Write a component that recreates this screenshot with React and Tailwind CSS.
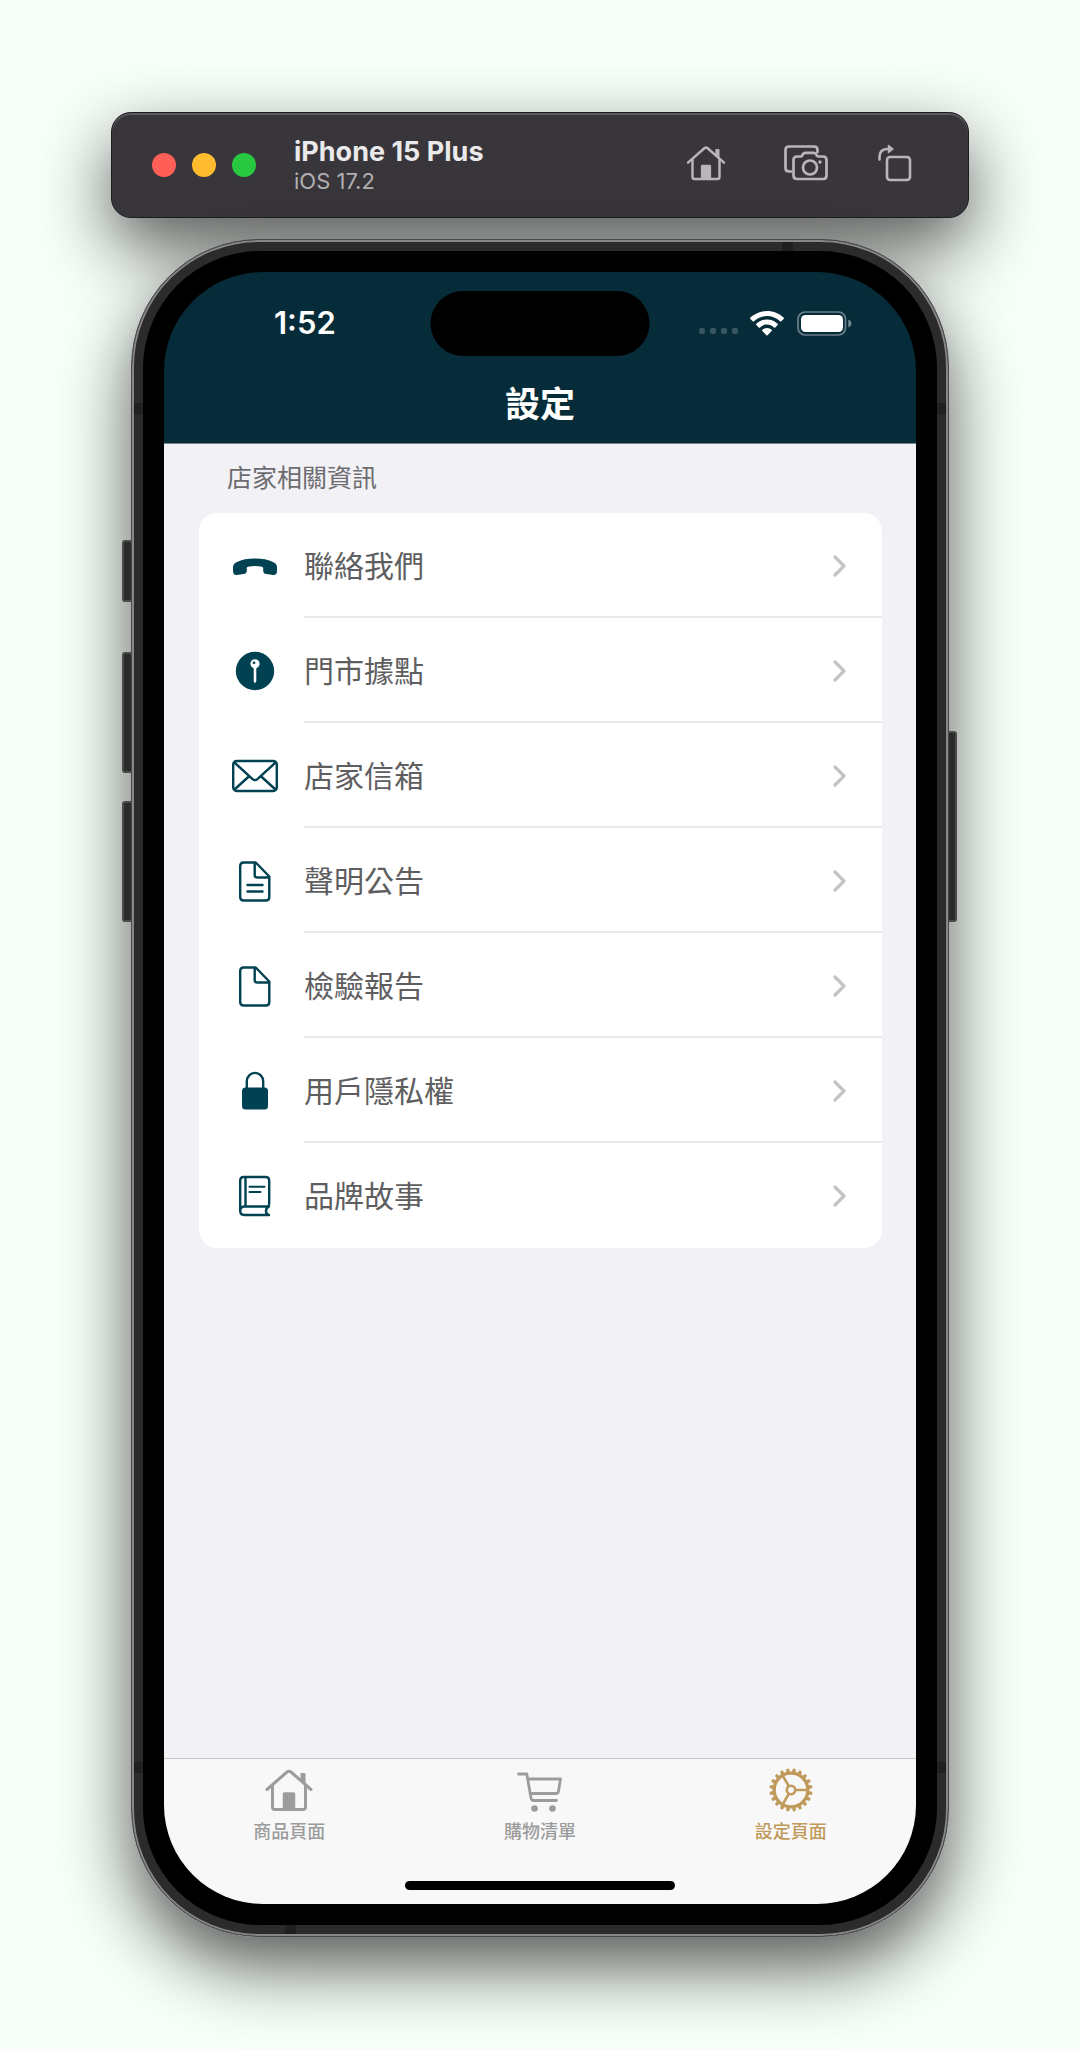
const CJK = "font-['Inter','Noto_Sans_CJK_TC',sans-serif]";

function HomeIcon({ className }) {
  return (
    <svg viewBox="0 0 48 44" className={className} fill="none" stroke="currentColor" strokeWidth="3" strokeLinecap="round" strokeLinejoin="round" aria-hidden="true">
      <path d="M2 21.500 22 4q2-1.600 4 0l20 17.500" />
      <path d="M7.500 18v21q0 2.500 2.500 2.500h28q2.500 0 2.500-2.500V18" />
      <path d="M36.500 12V6h3v9.500z" fill="currentColor" strokeWidth="2" />
      <path d="M18.500 41V26q0-1 1-1h9q1 0 1 1v15z" fill="currentColor" strokeWidth="1.500" />
    </svg>
  );
}

function CamerasIcon() {
  return (
    <svg viewBox="0 0 44 36" className="h-9 w-11" fill="none" stroke="currentColor" strokeWidth="2.700" strokeLinejoin="round" aria-hidden="true">
      <path d="M8 26.500H5q-3.500 0-3.500-3.500V5Q1.500 1.500 5 1.500h25q3.500 0 3.500 3.500v3" />
      <path d="M13 11.500h3.500q1 0 1.500-.8l1-1.700q.8-1.200 2.200-1.200h8.600q1.400 0 2.200 1.200l1 1.700q.5.800 1.500.8h4.500q3.500 0 3.500 3.500v15.500q0 3.500-3.500 3.500H13q-3.500 0-3.500-3.500V15q0-3.500 3.500-3.500z" />
      <circle cx="26" cy="22.500" r="7" />
      <circle cx="36" cy="17" r="1.700" fill="currentColor" stroke="none" />
    </svg>
  );
}

function RotateIcon() {
  return (
    <svg viewBox="0 0 34 38" className="h-[38px] w-[34px]" fill="none" stroke="currentColor" strokeWidth="2.600" strokeLinecap="round" strokeLinejoin="round" aria-hidden="true">
      <rect x="9" y="13" width="23" height="23" rx="3" />
      <path d="M1.500 15.500V13q0-7.500 7.500-8h2" />
      <path d="M10.500 1.500 15 5l-4.500 3.500z" fill="currentColor" strokeWidth="1.500" />
    </svg>
  );
}

function WifiIcon() {
  return (
    <svg viewBox="0 0 34 25" className="h-[25px] w-[34px]" fill="currentColor" aria-hidden="true">
      <path d="M17 0C10.600 0 4.800 2.500.4 6.600q-.7.700 0 1.400l2.300 2.300q.6.600 1.300 0C7.400 7 12 5 17 5s9.600 2 13 5.300q.7.600 1.300 0L33.600 8q.7-.7 0-1.400C29.200 2.500 23.400 0 17 0z" />
      <path d="M17 8.500c-4.100 0-7.800 1.600-10.600 4.200q-.7.700 0 1.400l2.300 2.300q.6.600 1.300 0c1.900-1.700 4.300-2.800 7-2.800s5.100 1.100 7 2.800q.7.600 1.300 0l2.300-2.300q.7-.7 0-1.400C24.800 10.100 21.100 8.500 17 8.500z" />
      <path d="M17 17c-1.800 0-3.400.7-4.600 1.800q-.7.700 0 1.300l4 4.200q.6.600 1.200 0l4-4.200q.7-.6 0-1.300C20.400 17.700 18.800 17 17 17z" />
    </svg>
  );
}

function BatteryIcon() {
  return (
    <svg viewBox="0 0 55 25" className="h-[25px] w-[55px]" aria-hidden="true">
      <rect x="1" y="1" width="47.500" height="23" rx="7" fill="none" stroke="#fff" strokeOpacity=".4" strokeWidth="1.700" />
      <rect x="4" y="4" width="42" height="17" rx="4.500" fill="#fff" />
      <path d="M51.300 8.500q3 1.200 3 4t-3 4z" fill="#fff" fillOpacity=".45" />
    </svg>
  );
}

const line = { fill: "none", stroke: "currentColor", strokeWidth: 2.4, strokeLinejoin: "round", strokeLinecap: "round" };

function Icon({ children }) {
  return (
    <svg viewBox="0 0 48 48" className="size-12 shrink-0 text-[#004152]" aria-hidden="true">
      {children}
    </svg>
  );
}

const PhoneIcon = () => (
  <Icon>
    <path fill="currentColor" d="M2 25.500c0-2.600 1.200-4.300 4-5.600C10.500 17.700 17 16.500 24 16.500s13.500 1.200 18 3.400c2.800 1.300 4 3 4 5.600v3.500c0 2.800-1.500 4.200-4 3.900l-6.500-.8c-2.300-.3-3.300-1.200-3.300-3.300v-2.600c0-.9-.4-1.300-1.200-1.500-2-.5-4.300-.7-7-.7s-5 .2-7 .7c-.8.200-1.200.6-1.200 1.500v2.600c0 2.100-1 3-3.300 3.300l-6.500.8c-2.500.3-4-1.100-4-3.900z" />
  </Icon>
);

const PinIcon = () => (
  <Icon>
    <circle cx="24" cy="24" r="19.200" fill="currentColor" />
    <circle cx="24" cy="16.800" r="4.600" fill="#fff" />
    <circle cx="23" cy="15.800" r="1.400" fill="currentColor" />
    <path d="M22.700 20h2.600v14L24 36.500 22.700 34z" fill="#fff" />
  </Icon>
);

const MailIcon = () => (
  <Icon>
    <g {...line}>
      <rect x="2.200" y="9" width="43.600" height="30" rx="3.500" />
      <path d="m3.500 10.500 17.800 16.300q2.700 2.400 5.400 0L44.500 10.500M3.500 37.500l14.300-13M44.500 37.500l-14.300-13" />
    </g>
  </Icon>
);

const page = "M12.700 5.500h12L38.300 19.500V40q0 3.500-3.500 3.500H12.700q-3.500 0-3.500-3.500V9q0-3.500 3.500-3.500zM23.700 6v12.200q0 2.300 2.300 2.300h12";

const FileTextIcon = () => (
  <Icon>
    <path {...line} d={page} />
    <path {...line} d="M16.500 28h15M16.500 34.500h15" />
  </Icon>
);

const FileIcon = () => (
  <Icon>
    <path {...line} d={page} />
  </Icon>
);

const LockIcon = () => (
  <Icon>
    <rect x="11" y="20.500" width="26" height="22" rx="3.500" fill="currentColor" />
    <path {...line} d="M15.800 22v-7.500a8.200 8.600 0 0 1 16.400 0V22" />
  </Icon>
);

const BookIcon = () => (
  <Icon>
    <path {...line} d="M9.200 38V8.500Q9.200 5 12.700 5h22q3.500 0 3.500 3.500v23q0 2.500-2 3.500M14.500 5v29M38 34.500H13.200q-4 .3-4 4.500 0 4 4 4H38q-3-.5-3-4t3-4.500" />
    <path {...line} strokeWidth="2" d="M18.500 14.800h15M18.500 20h11" />
  </Icon>
);

function CartIcon() {
  return (
    <svg viewBox="0 0 48 44" className="h-11 w-12" fill="none" stroke="currentColor" strokeWidth="2.800" strokeLinecap="round" strokeLinejoin="round" aria-hidden="true">
      <path d="M2.500 6h8.300l4.200 24q.4 2.500 3 2.500h22.500" />
      <path d="M12 11h32.500l-2 12.300q-.3 2.200-2.500 2.200H14.500" />
      <circle cx="18.500" cy="40.500" r="3.300" fill="currentColor" stroke="none" />
      <circle cx="36.500" cy="40.500" r="3.300" fill="currentColor" stroke="none" />
    </svg>
  );
}

const TEETH = Array.from({ length: 20 }, (_, i) => i * 18 + 9);

function GearIcon() {
  return (
    <svg viewBox="0 0 44 44" className="size-11" fill="none" stroke="currentColor" strokeWidth="2.600" aria-hidden="true">
      <circle cx="22" cy="22" r="16.800" strokeWidth="3.200" />
      <circle cx="22" cy="22" r="4.200" />
      <path d="M26.200 22H39M19.900 18.400 13.700 7.600M19.900 25.600l-6.200 10.800" />
      {TEETH.map((a) => (
        <path key={a} d="M19.900 4.500 20.700.5h2.600l.8 4z" fill="currentColor" stroke="none" transform={`rotate(${a} 22 22)`} />
      ))}
    </svg>
  );
}

const ROWS = [
  ["聯絡我們", PhoneIcon],
  ["門市據點", PinIcon],
  ["店家信箱", MailIcon],
  ["聲明公告", FileTextIcon],
  ["檢驗報告", FileIcon],
  ["用戶隱私權", LockIcon],
  ["品牌故事", BookIcon],
];

function SimulatorBar() {
  return (
    <header className="flex h-[106px] items-center rounded-[20px] border border-[#1d1c1f] bg-[#39363b] pr-[56px] pl-10 shadow-[inset_0_2px_0_#5c5a5e,0_28px_70px_rgba(0,0,0,0.65)]">
      <div className="flex gap-4">
        <button aria-label="Close" className="size-6 rounded-full bg-[#ff5f57]" />
        <button aria-label="Minimize" className="size-6 rounded-full bg-[#febc2e]" />
        <button aria-label="Zoom" className="size-6 rounded-full bg-[#28c840]" />
      </div>
      <div className="ml-[38px] flex-1">
        <h1 className="text-[27px] leading-8 font-bold text-[#ebeaeb]">iPhone 15 Plus</h1>
        <p className="text-[22px] leading-[26px] text-[#b1afb2]">iOS 17.2</p>
      </div>
      <div className="flex items-center pb-1 text-[#b9b6bb]">
        <button aria-label="Home">
          <HomeIcon className="h-9 w-10" />
        </button>
        <button aria-label="Screenshot" className="ml-[58px]">
          <CamerasIcon />
        </button>
        <button aria-label="Rotate" className="ml-[50px]">
          <RotateIcon />
        </button>
      </div>
    </header>
  );
}

function StatusBar() {
  return (
    <div className="relative flex h-[102px] items-center justify-between pr-16 pl-[110px] text-white">
      <span className="text-[31px] leading-9 font-semibold">1:52</span>
      <div className="absolute top-[19px] left-1/2 h-[65px] w-[219px] -translate-x-1/2 rounded-full bg-black" />
      <div className="flex items-center">
        <div className="mt-4 mr-3 flex gap-[5px]">
          {[0, 1, 2, 3].map((i) => (
            <span key={i} className="size-[6px] rounded-[2px] bg-white/20" />
          ))}
        </div>
        <WifiIcon />
        <span className="w-[13px]" />
        <BatteryIcon />
      </div>
    </div>
  );
}

function SettingsScreen() {
  return (
    <div className="flex min-h-[1632px] flex-col overflow-hidden rounded-[99px]">
      <div className="h-[172px] border-b border-[#71858e] bg-[#062c39]">
        <StatusBar />
        <h2 className="pt-1 text-center text-[35px] leading-[52px] font-bold text-white">設定</h2>
      </div>
      <main className="flex-1 bg-[#f2f1f6] pr-[34px] pl-[35px]">
        <h3 className="pt-4 pb-4 pl-7 text-[25px] leading-[37px] text-[#6d6c70]">店家相關資訊</h3>
        <ul className="overflow-hidden rounded-[18px] bg-white">
          {ROWS.map(([label, RowIcon]) => (
            <li key={label} className="group">
              <a href="#" className="flex h-[105px] items-center pl-8 text-[30px] text-[#5e5e60]">
                <RowIcon />
                <span className="ml-[25px] flex h-full flex-1 items-center justify-between border-b-2 border-[#e9e9ea] pt-[3px] pr-9 group-last:border-transparent">
                  {label}
                  <svg viewBox="0 0 13 22" className="h-[22px] w-[13px]" fill="none" stroke="#c4c4c6" strokeWidth="3.200" strokeLinecap="round" strokeLinejoin="round" aria-hidden="true">
                    <path d="m2 2 9 9-9 9" />
                  </svg>
                </span>
              </a>
            </li>
          ))}
        </ul>
      </main>
      <nav className="border-t border-[#c9c8cd] bg-[#f8f8f8]">
        <div className="grid grid-cols-3 pt-[9px] text-[18px] leading-6 font-medium text-[#9c9c9c]">
          <a href="#" className="flex flex-col items-center gap-2">
            <HomeIcon className="h-11 w-12" />
            商品頁面
          </a>
          <a href="#" className="flex flex-col items-center gap-2">
            <CartIcon />
            購物清單
          </a>
          <a href="#" aria-current="page" className="flex flex-col items-center gap-2 text-[#c09a5b]">
            <GearIcon />
            設定頁面
          </a>
        </div>
        <div className="mx-auto mt-[37px] mb-[14px] h-[9px] w-[270px] rounded-full bg-black" />
      </nav>
    </div>
  );
}

function SideButton({ className }) {
  return <span className={`absolute w-[11px] rounded-[3px] border-2 border-[#4b4b4b] bg-[#2b2b2b] ${className}`} />;
}

function Phone() {
  return (
    <div className="relative mx-5 mt-[21px] rounded-[128px] shadow-[0_30px_70px_rgba(0,0,0,0.65)]">
      <SideButton className="top-[301px] -left-[9px] h-[62px]" />
      <SideButton className="top-[413px] -left-[9px] h-[121px]" />
      <SideButton className="top-[562px] -left-[9px] h-[121px]" />
      <SideButton className="top-[492px] -right-[8px] h-[191px]" />
      <div className="relative rounded-[128px] border border-[#4a4a4a] bg-[#2b2b2b] p-[11px] shadow-[inset_0_0_0_2px_#868686]">
        <span className="absolute top-[2px] right-[155px] h-[9px] w-[11px] bg-[#202020]" />
        <span className="absolute bottom-[2px] left-[153px] h-[9px] w-[11px] bg-[#202020]" />
        <span className="absolute top-[163px] left-[2px] h-[11px] w-[9px] bg-[#202020]" />
        <span className="absolute top-[163px] right-[2px] h-[11px] w-[9px] bg-[#202020]" />
        <span className="absolute bottom-[163px] left-[2px] h-[11px] w-[9px] bg-[#202020]" />
        <span className="absolute right-[2px] bottom-[163px] h-[11px] w-[9px] bg-[#202020]" />
        <div className="rounded-[117px] bg-black p-[21px]">
          <SettingsScreen />
        </div>
      </div>
    </div>
  );
}

export default function App() {
  return (
    <div className={`min-h-screen bg-[#f8fff9] px-[111px] pt-28 pb-[113px] ${CJK}`}>
      <SimulatorBar />
      <Phone />
    </div>
  );
}
